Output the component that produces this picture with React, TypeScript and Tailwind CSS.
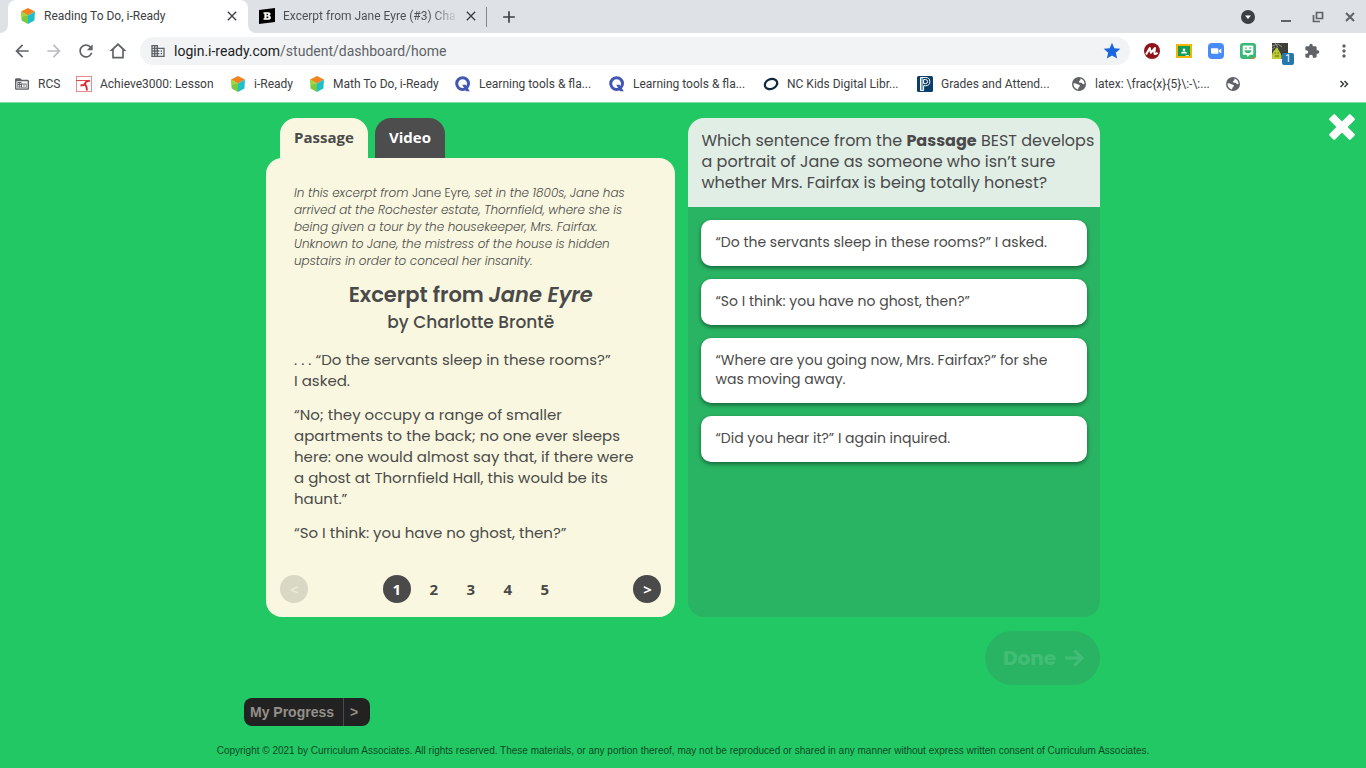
import React, { useState } from 'react';
import { MdArrowBack, MdArrowForward, MdRefresh, MdBusiness, MdStar, MdExtension, MdMoreVert, MdClose, MdAdd } from 'react-icons/md';

function Cube() {
  return (
    <svg viewBox="0 0 16 16" className="size-4 shrink-0" aria-hidden="true">
      <path d="M8 0 15 3.6 8 7.4 1 3.6Z" fill="#f58220" />
      <path d="M1 3.6 8 7.4V16L1.6 12.4Z" fill="#7ac943" />
      <path d="M15 3.6 8 7.4V16l6.4-3.6Z" fill="#1fbfc9" />
      <path d="M1 3.6 4.5 5.5 8 7.4 2 9Z" fill="#a4d63f" />
    </svg>
  );
}

function Achieve() {
  return (
    <svg viewBox="0 0 16 16" className="size-4 shrink-0" aria-hidden="true">
      <rect x=".5" y=".5" width="15" height="15" fill="#fff" stroke="#e58c8c" />
      <path d="M0 4.5h12" fill="none" stroke="#e0484c" strokeWidth="1" />
      <path d="M14 4.500 10 6 8 9 4.500 9.500M9 8l1.500 3 .5 3.500" fill="none" stroke="#d9272e" strokeWidth="1.800" />
    </svg>
  );
}

function FolderBuilding() {
  return (
    <svg viewBox="0 0 16 16" className="size-4 shrink-0" aria-hidden="true">
      <path d="M2.4 2.2h4l1.4 1.5h5.8c.8 0 1.4.6 1.4 1.4v7.3c0 .8-.6 1.4-1.4 1.4H2.4c-.8 0-1.4-.6-1.4-1.4V3.6c0-.8.6-1.4 1.4-1.4Z" fill="#5f6368" />
      <path d="M2.4 5.3h11.2v7.1H2.4Z" fill="#fff" />
      <path d="M3.4 6h4v1.5h5.2v4.3H3.4Z" fill="#5f6368" />
      <path d="M4.2 7.2h1v.9h-1zm1.7 0h1v.9h-1zM4.2 9h1v.9h-1zm1.7 0h1v.9h-1zM4.2 10.6h1v.8h-1zm1.7 0h1v.8h-1zM8 8.4h3.8v2.8H8z" fill="#fff" />
      <path d="M9.3 9h1.3v.7H9.3zm0 1.2h1.3v.6H9.3z" fill="#5f6368" />
    </svg>
  );
}

function Globe() {
  return (
    <svg viewBox="0 0 16 16" className="size-4 shrink-0" aria-hidden="true">
      <circle cx="8" cy="8" r="7" fill="#5f6368" />
      <path d="M9.200 2.600c2.500.5 4.300 2.700 4.400 5.200-1 .9-2 .3-2.500-.6-.4-.8-1.800-.3-2.600-.6-1-.4-.6-1.600.2-1.900.8-.3 1.100-1.100.5-2.100ZM2.500 7.300c1.500-.2 2.700.2 4 1 .9.500 2.300.4 2.400 1.500.1 1-1.200 1.100-1.400 2-.1.700-.3 1.200-.8 1.600C4 12.800 2.300 10.400 2.500 7.300Z" fill="#fff" />
    </svg>
  );
}

function QuizMark() {
  return (
    <svg viewBox="0 0 16 16" className="size-4 shrink-0" aria-hidden="true">
      <circle cx="7.6" cy="7.6" r="5.9" fill="none" stroke="#4257b2" strokeWidth="3" />
      <path d="M7.2 8.8h3.4l4.2 6.4h-3.6Z" fill="#4257b2" />
    </svg>
  );
}

function OvalMark() {
  return (
    <svg viewBox="0 0 16 16" className="size-4 shrink-0" aria-hidden="true">
      <ellipse cx="8" cy="8" rx="6.4" ry="4.9" transform="rotate(-22 8 8)" fill="none" stroke="#0d2a40" strokeWidth="2.3" />
    </svg>
  );
}

function PowerMark() {
  return (
    <svg viewBox="0 0 16 16" className="size-4 shrink-0" aria-hidden="true">
      <rect width="16" height="16" rx="1.5" fill="#0b3e68" />
      <path d="M3.5 1.5h5.2a4 4 0 0 1 0 8.2H6.6v4.8H3.5Z M5 1.5v13M6.6 3.6h2a2 2 0 0 1 0 4h-2Z" fill="none" stroke="#fff" strokeWidth="1" />
    </svg>
  );
}

function BrainlyMark() {
  return (
    <svg viewBox="0 0 16 16" className="size-4 shrink-0" aria-hidden="true">
      <path d="M0 2 16 0v14L0 16Z" fill="#000" />
      <path d="M4.5 4.2h4.8c3 0 2.8 3 .9 3.5 2.5.4 2.3 4.1-1 4.1H4.5v-1.6h.9V5.8h-.9Zm3 1.5v1.5h1c1 0 1-1.5 0-1.5Zm0 2.9v1.6h1.2c1.2 0 1.2-1.6 0-1.6Z" fill="#fff" />
    </svg>
  );
}

function HomeIcon() {
  return (
    <svg viewBox="0 0 24 24" className="size-5" fill="#5f6368" aria-hidden="true">
      <path d="M12 2.5 1.8 12H5v9h14v-9h3.2Zm5 16.5H7v-8.9l5-4.6 5 4.6Z" />
    </svg>
  );
}

function MaroonM() {
  return (
    <svg viewBox="0 0 16 16" className="size-4" aria-hidden="true">
      <circle cx="8" cy="8" r="8" fill="#8e1519" />
      <path d="M2 11.500 5.800 5l1 4.800L11 5l-.6 5.200c0 1.200 1.600 1 3.200-.4" fill="none" stroke="#fff" strokeWidth="2" strokeLinejoin="round" />
    </svg>
  );
}

function Classroom() {
  return (
    <svg viewBox="0 0 16 16" className="size-4" aria-hidden="true">
      <path d="M0 1h16v14H0Z" fill="#f4b400" />
      <path d="M2 3h12v10H2Z" fill="#0f9d58" />
      <circle cx="8" cy="6.700" r="1.300" fill="#fff" />
      <path d="M4.800 10.500c.3-1.500 1.800-2 3.200-2s2.900.5 3.200 2Z" fill="#fff" />
      <path d="M9.500 12.200H13V13H9.500Z" fill="#fff" />
    </svg>
  );
}

function Camera() {
  return (
    <svg viewBox="0 0 16 16" className="size-4" aria-hidden="true">
      <rect width="16" height="16" rx="4" fill="#4a8cf7" />
      <path d="M3 5.300h6c.8 0 1.300.5 1.300 1.200v4.200H4.300C3.500 10.700 3 10.200 3 9.500Zm7.800 1.900L13.300 5.500v5l-2.500-1.700Z" fill="#fff" />
    </svg>
  );
}

function Chatter() {
  return (
    <svg viewBox="0 0 16 16" className="size-4" aria-hidden="true">
      <rect width="16" height="16" rx="3" fill="#39b977" />
      <path d="M4 2.500h8c.8 0 1.300.5 1.300 1.300v6.600c0 .8-.5 1.300-1.300 1.300H9.500L7.800 14l-1.300-2.300H4c-.8 0-1.300-.5-1.300-1.300V3.800c0-.8.500-1.300 1.300-1.300Z" fill="#fff" />
      <path d="M4.500 7.300h7c0 4-7 4-7 0Z" fill="#39b977" />
      <path d="m5 5.500 1-.8 1 .8M9 5h2.300" fill="none" stroke="#39b977" strokeWidth="1" />
      <path d="M10 15.500c1-1 3-1.500 5-1.200L13.500 16Z" fill="#d9782d" />
    </svg>
  );
}

function Creature() {
  return (
    <svg viewBox="0 0 16 16" className="size-4" aria-hidden="true">
      <rect width="16" height="16" fill="#3d3f3b" />
      <path d="m0 3 6-2 4 3M3 0l3 4M0 6l3-2" stroke="#8f958b" fill="none" />
      <path d="M0 12c1-4 3-5 4-7 1-1 2 0 2 1 1 2 3 4 3.500 7V16H0Z" fill="#bccb2f" />
      <path d="M2.500 10h1.500m1.500 0H7M3 13h4" stroke="#5e6720" fill="none" />
    </svg>
  );
}

const bookmarks: { label: string; icon: React.ReactNode; width: string }[] = [
  { label: 'RCS', icon: <FolderBuilding />, width: 'w-[62px]' },
  { label: 'Achieve3000: Lesson', icon: <Achieve />, width: 'w-[154px]' },
  { label: 'i-Ready', icon: <Cube />, width: 'w-[79px]' },
  { label: 'Math To Do, i-Ready', icon: <Cube />, width: 'w-[146px]' },
  { label: 'Learning tools & fla...', icon: <QuizMark />, width: 'w-[154px]' },
  { label: 'Learning tools & fla...', icon: <QuizMark />, width: 'w-[154px]' },
  { label: 'NC Kids Digital Libr...', icon: <OvalMark />, width: 'w-[154px]' },
  { label: 'Grades and Attend...', icon: <PowerMark />, width: 'w-[154px]' },
  { label: 'latex: \\frac{x}{5}\\:-\\:...', icon: <Globe />, width: 'w-[154px]' },
  { label: '', icon: <Globe />, width: 'w-4' },
];

function Browser() {
  return (
    <header className="bg-white font-['Roboto',sans-serif] text-[#3c4043]">
      <div className="flex h-[33px] items-center bg-[#dee1e6] text-xs">
        <div className="flex h-full w-2 bg-white"><span className="w-2 rounded-br-lg bg-[#dee1e6]" /></div>
        <div className="flex h-full w-60 items-center rounded-t-lg bg-white pr-2 pb-px pl-3">
          <Cube />
          <span className="ml-2 flex-1 whitespace-nowrap">Reading To Do, i-Ready</span>
          <button aria-label="Close tab" className="text-[#3c4043]"><MdClose className="size-4" /></button>
        </div>
        <div className="flex h-full w-2 bg-white"><span className="w-2 rounded-bl-lg bg-[#dee1e6]" /></div>
        <div className="flex h-full w-[230px] items-center pb-px pl-[3px]">
          <BrainlyMark />
          <span className="ml-2 w-[175px] overflow-hidden bg-linear-to-r from-[#4a4d51] from-85% to-[#dee1e6] bg-clip-text whitespace-nowrap text-transparent">Excerpt from Jane Eyre (#3) Cha</span>
          <button aria-label="Close tab" className="ml-[5px] text-[#3c4043]"><MdClose className="size-4" /></button>
        </div>
        <span className="h-5 w-px bg-[#80868b]" />
        <button aria-label="New tab" className="ml-3"><MdAdd className="size-5" /></button>
        <div className="ml-auto flex items-center gap-4 pr-2 text-[#5f6368]">
          <button aria-label="Search tabs" className="mr-[6px]">
            <svg viewBox="0 0 16 16" className="size-4"><circle cx="8" cy="8" r="7" fill="#3c4043" /><path d="M5 6.500h6L8 10Z" fill="#fff" /></svg>
          </button>
          <button aria-label="Minimize"><svg viewBox="0 0 16 16" className="size-4"><path d="M3 12h10" stroke="currentColor" strokeWidth="2" /></svg></button>
          <button aria-label="Restore"><svg viewBox="0 0 16 16" className="size-4"><path d="M6.500 3.500h6v6h-6ZM3.500 6v6.500H10" fill="none" stroke="currentColor" strokeWidth="1.700" /></svg></button>
          <button aria-label="Close window"><svg viewBox="0 0 16 16" className="size-4"><path d="m4 4 8 8M12 4l-8 8" stroke="currentColor" strokeWidth="2" /></svg></button>
        </div>
      </div>
      <div className="flex h-9 items-center gap-3 pr-3 pl-3 text-[#5f6368]">
        <button aria-label="Back"><MdArrowBack className="size-5" /></button>
        <button aria-label="Forward" className="text-[#babcbe]"><MdArrowForward className="size-5" /></button>
        <button aria-label="Reload"><MdRefresh className="size-5" /></button>
        <button aria-label="Home"><HomeIcon /></button>
        <div className="flex h-7 flex-1 items-center rounded-full bg-[#f1f3f4] pr-2 pl-[10px]">
          <MdBusiness className="size-4" />
          <a href="#address" className="ml-2 flex-1 text-sm"><span className="text-[#202124]">login.i-ready.com</span>/student/dashboard/home</a>
          <MdStar className="size-5 text-[#1a66e0]" />
        </div>
        <div className="ml-[2px] flex items-center gap-4">
          <MaroonM />
          <Classroom />
          <Camera />
          <Chatter />
          <div className="relative">
            <Creature />
            <span className="absolute top-[10px] left-[10px] grid h-3 w-3 place-items-center rounded-xs bg-[#2678ac] text-[10px] leading-3 text-white">1</span>
          </div>
          <button aria-label="Extensions"><MdExtension className="size-4" /></button>
          <button aria-label="Menu" className="-ml-[2px]"><MdMoreVert className="size-5" /></button>
        </div>
      </div>
      <nav className="flex h-[34px] items-center border-b border-[#7fdca4] pb-[3px] pl-[14px] text-xs">
        {bookmarks.map((b, i) => (
          <a key={i} href="#bookmark" aria-label={b.label || 'Bookmark'} className={`flex shrink-0 items-center gap-2 whitespace-nowrap ${b.width}`}>
            {b.icon}
            {b.label && <span>{b.label}</span>}
          </a>
        ))}
        <button aria-label="More bookmarks" className="mr-[17px] ml-auto">
          <svg viewBox="0 0 10 10" className="size-[10px]"><path d="m1.500 2 3 3-3 3M5.500 2l3 3-3 3" fill="none" stroke="#3c4043" strokeWidth="1.500" /></svg>
        </button>
      </nav>
    </header>
  );
}

const answers = [
  '“Do the servants sleep in these rooms?” I asked.',
  '“So I think: you have no ghost, then?”',
  '“Where are you going now, Mrs. Fairfax?” for she was moving away.',
  '“Did you hear it?” I again inquired.',
];

function Passage() {
  const [page, setPage] = useState(1);
  return (
    <section className="flex flex-col">
      <div className="flex gap-[7px] pl-[14px] font-['Open_Sans',sans-serif] text-[15px] font-bold">
        <button className="h-10 w-[88px] rounded-t-2xl bg-[#f9f7df] pb-[2px] text-[#4a4a4a]">Passage</button>
        <button className="h-10 w-[70px] rounded-t-2xl bg-[#4d4d4d] pb-[2px] text-white">Video</button>
      </div>
      <div className="flex flex-1 flex-col rounded-2xl bg-[#f9f7df] px-[14px] pt-[26px] pb-[14px]">
        <div className="flex-1 px-[14px]">
          <p className="text-xs leading-[17px] font-light italic">
            In this excerpt from <span className="not-italic">Jane Eyre</span>, set in the 1800s, Jane has<br />
            arrived at the Rochester estate, Thornfield, where she is<br />
            being given a tour by the housekeeper, Mrs. Fairfax.<br />
            Unknown to Jane, the mistress of the house is hidden<br />
            upstairs in order to conceal her insanity.
          </p>
          <h1 className="mt-3 text-center text-[21px] leading-7 font-semibold">Excerpt from <em>Jane Eyre</em></h1>
          <h2 className="text-center text-[17px] leading-[26px] font-medium">by Charlotte Brontë</h2>
          <div className="mt-[14px] flex flex-col gap-[13px] text-[15px] leading-[21px]">
            <p>. . . “Do the servants sleep in these rooms?”<br />I asked.</p>
            <p>
              “No; they occupy a range of smaller<br />
              apartments to the back; no one ever sleeps<br />
              here: one would almost say that, if there were<br />
              a ghost at Thornfield Hall, this would be its<br />
              haunt.”
            </p>
            <p>“So I think: you have no ghost, then?”</p>
          </div>
        </div>
        <div className="flex items-center justify-between font-['Open_Sans',sans-serif] text-[15px] font-bold">
          <button disabled aria-label="Previous page" className="size-7 rounded-full bg-[#d9d8c5] text-[#eceada]">&lt;</button>
          <div className="flex gap-[9px]">
            {[1, 2, 3, 4, 5].map((n) => (
              <button key={n} onClick={() => setPage(n)} className={n === page ? 'size-7 rounded-full bg-[#4a4a4a] text-white' : 'size-7 rounded-full'}>{n}</button>
            ))}
          </div>
          <button aria-label="Next page" className="size-7 rounded-full bg-[#4a4a4a] text-white">&gt;</button>
        </div>
      </div>
    </section>
  );
}

export default function App() {
  return (
    <div className="flex min-h-screen flex-col bg-[#22c864] font-['Poppins','Inter',sans-serif] text-[#4a4a4a]">
      <Browser />
      <main className="relative flex flex-1 flex-col pt-[15px]">
        <button aria-label="Close lesson" className="absolute top-[11px] right-[11px]">
          <svg viewBox="0 0 26 26" className="size-[26px]" fill="#fff">
            <rect x="-2" y="9" width="30" height="8" rx="1.5" transform="rotate(45 13 13)" />
            <rect x="-2" y="9" width="30" height="8" rx="1.5" transform="rotate(-45 13 13)" />
          </svg>
        </button>
        <div className="mx-auto grid min-h-[499px] w-full max-w-[834px] grid-cols-[409fr_411fr] gap-[13px]">
          <Passage />
          <section className="overflow-hidden rounded-2xl bg-[#29b463]">
            <p className="h-[89px] bg-[#e0eee6] pt-3 pl-[13px] text-base leading-[21px]">
              Which sentence from the <b>Passage</b> BEST develops<br />
              a portrait of Jane as someone who isn’t sure<br />
              whether Mrs. Fairfax is being totally honest?
            </p>
            <div className="flex flex-col gap-[13px] p-[13px]">
              {answers.map((a) => (
                <button key={a} className="rounded-[10px] bg-white px-[14px] pt-[13px] pb-[14px] text-left text-sm leading-[19px] shadow-[0_2px_4px_rgba(0,0,0,0.45)]">{a}</button>
              ))}
            </div>
          </section>
        </div>
        <div className="mx-auto mt-[14px] flex w-full max-w-[834px] justify-end">
          <button disabled className="flex h-[54px] items-center gap-2 rounded-full bg-[#29b463] pr-4 pl-[18px] text-xl font-bold text-[#43bd76]">
            Done
            <svg viewBox="0 0 20 20" className="size-5"><path d="M1 10h16M10.500 2.500 18 10l-7.500 7.500" fill="none" stroke="currentColor" strokeWidth="3" /></svg>
          </button>
        </div>
        <div className="mx-auto mt-[13px] flex w-full max-w-[878px]">
          <button className="flex h-7 items-center rounded-lg bg-[#222] font-['Liberation_Sans',sans-serif] text-sm font-bold text-[#94908a]">
            <span className="pr-[9px] pl-[6px]">My Progress</span>
            <span className="flex h-full w-[27px] items-center border-l border-[#4a4a4a] pl-[6px]">&gt;</span>
          </button>
        </div>
        <footer className="mt-[17px] text-center font-['Liberation_Sans',sans-serif] text-[10px] leading-4 text-[#0b4b25]">
          Copyright © 2021 by Curriculum Associates. All rights reserved. These materials, or any portion thereof, may not be reproduced or shared in any manner without express written consent of Curriculum Associates.
        </footer>
      </main>
    </div>
  );
}
